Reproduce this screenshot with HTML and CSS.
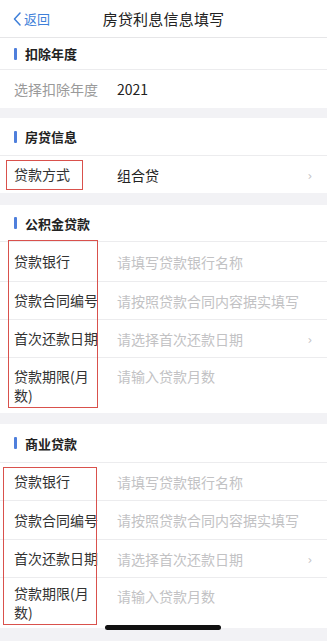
FILE: index.html
```html
<!DOCTYPE html>
<html lang="zh">
<head>
<meta charset="utf-8">
<link rel="stylesheet" href="styles.css">
</head>
<body>
<div class="screen">
  <header class="nav">
    <div class="back"><svg class="back-ico" viewBox="0 0 8 14" width="8" height="14"><path d="M7 1 L1.5 7 L7 13" fill="none" stroke="#3f7fd9" stroke-width="1.5" stroke-linecap="round" stroke-linejoin="round"/></svg><span>返回</span></div>
    <div class="title">房贷利息信息填写</div>
  </header>

  <section class="card">
    <div class="head first">扣除年度</div>
    <div class="row r39">
      <div class="label muted">选择扣除年度</div>
      <div class="value">2021</div>
    </div>
  </section>

  <section class="card">
    <div class="head">房贷信息</div>
    <div class="row">
      <div class="label">贷款方式</div>
      <div class="value">组合贷</div>
      <span class="chev">›</span>
    </div>
    <div class="mark mark-a"></div>
  </section>

  <section class="card c3">
    <div class="head h3">公积金贷款</div>
    <div class="row r40"><div class="label">贷款银行</div><div class="value ph">请填写贷款银行名称</div></div>
    <div class="row"><div class="label">贷款合同编号</div><div class="value ph">请按照贷款合同内容据实填写</div></div>
    <div class="row"><div class="label">首次还款日期</div><div class="value ph">请选择首次还款日期</div><span class="chev">›</span></div>
    <div class="row tall"><div class="label">贷款期限(月数)</div><div class="value ph">请输入贷款月数</div></div>
    <div class="mark mark-b"></div>
  </section>

  <section class="card c4">
    <div class="head h4">商业贷款</div>
    <div class="row"><div class="label">贷款银行</div><div class="value ph">请填写贷款银行名称</div></div>
    <div class="row r39"><div class="label">贷款合同编号</div><div class="value ph">请按照贷款合同内容据实填写</div></div>
    <div class="row"><div class="label">首次还款日期</div><div class="value ph">请选择首次还款日期</div><span class="chev">›</span></div>
    <div class="row tall last"><div class="label">贷款期限(月数)</div><div class="value ph">请输入贷款月数</div></div>
    <div class="mark mark-c"></div>
  </section>

  <div class="home"></div>
</div>
</body>
</html>
```

FILE: styles.css
```css
* { box-sizing: border-box; }
html, body { margin: 0; padding: 0; }
body {
  background: #f2f2f5;
  font-family: "Noto Sans CJK SC", "Noto Sans", sans-serif;
  color: #222;
}
.screen {
  position: relative;
  width: 327px;
  height: 641px;
  overflow: hidden;
  background: #f2f2f5;
  display: flex;
  flex-direction: column;
  gap: 10px;
}
.nav {
  position: relative;
  height: 38px;
  background: #fff;
  border-bottom: 1px solid #e6e6e8;
  display: flex;
  align-items: center;
  justify-content: center;
  margin-bottom: -10px;
  flex-shrink: 0;
}
.back {
  position: absolute;
  left: 13px;
  top: 0;
  height: 37px;
  display: flex;
  align-items: center;
  gap: 3px;
  color: #3f7fd9;
  font-size: 13px;
}
.back-ico { display: block; }
.title {
  font-size: 15px;
  color: #222;
  letter-spacing: 0.2px;
}
.card {
  position: relative;
  background: #fff;
  flex-shrink: 0;
}
.card.c3 { margin-top: 2px; }
.card.c4 { margin-top: 1px; }
.head {
  height: 37px;
  display: flex;
  align-items: center;
  padding-left: 14px;
  font-size: 13px;
  font-weight: 700;
  color: #222;
}
.head.first { height: 31px; }
.head.h3 { height: 36px; }
.head.h4 { height: 38px; }
.head::before {
  content: "";
  width: 3px;
  height: 12px;
  border-radius: 1px;
  background: #4f7fdc;
  margin-right: 8px;
}
.row {
  position: relative;
  height: 38px;
  display: flex;
  align-items: center;
  padding-left: 14px;
  padding-right: 14px;
  border-top: 1px solid #ececee;
  font-size: 14px;
}
.row.r39 { height: 39px; }
.row.r40 { height: 40px; }
.row.tall { height: 56px; }
.row.tall.last { height: 51px; }
.label {
  width: 90px;
  margin-right: 13px;
  color: #333;
  line-height: 19px;
  flex-shrink: 0;
}
.label.muted { color: #9a9a9a; }
.value { flex: 1; color: #222; white-space: nowrap; }
.value.ph { color: #c2c2c4; }
.tall .value { align-self: flex-start; padding-top: 8px; }
.chev {
  color: #c4c4c6;
  font-size: 15px;
  line-height: 1;
  margin-right: 1px;
  transform: scaleY(0.8);
}
.mark {
  position: absolute;
  border: 1.5px solid #d9514c;
  pointer-events: none;
}
.mark-a { left: 6px; top: 42px; width: 77px; height: 30px; }
.mark-b { left: 8px; top: 35px; width: 90px; height: 168px; }
.mark-c { left: 3px; top: 43px; width: 94px; height: 158px; }
.home {
  position: absolute;
  left: 105px;
  top: 625px;
  width: 116px;
  height: 5px;
  border-radius: 3px;
  background: #111;
}
```
